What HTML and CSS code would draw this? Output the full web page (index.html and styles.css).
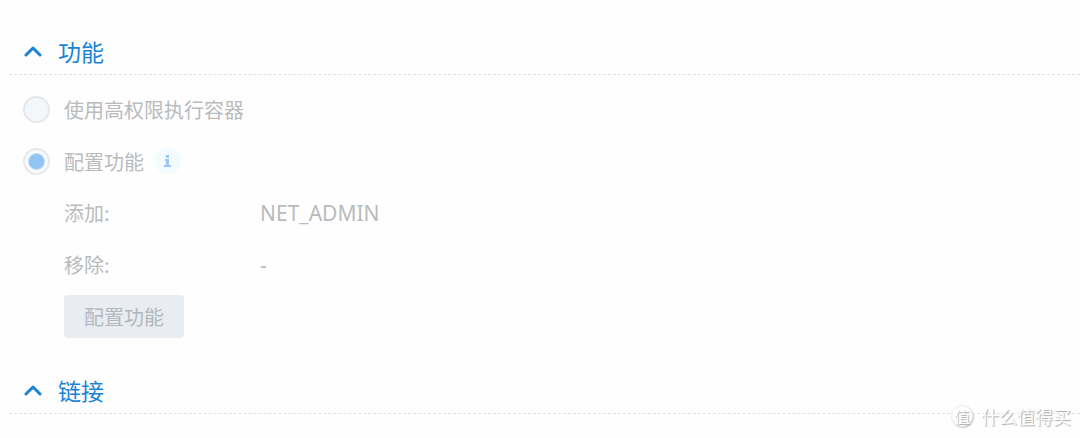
FILE: index.html
```html
<!DOCTYPE html>
<html lang="zh-CN">
<head>
    <meta charset="UTF-8">
    <title>功能</title>
    <meta name="viewport" content="width=device-width, initial-scale=1.0">
    <link rel="stylesheet" href="styles.css">
</head>
<body>

<div class="main">
    <section class="section">
        <h2 class="section-title">
            <button type="button" class="toggle">
                <svg class="arrow" viewBox="0 0 18 12"><path d="M2 10 L9 3 L16 10"/></svg>
                <span>功能</span>
            </button>
        </h2>

        <div class="section-body">
            <div class="option">
                <input type="radio" name="capability" id="privileged" disabled>
                <label for="privileged">使用高权限执行容器</label>
            </div>

            <div class="option">
                <input type="radio" name="capability" id="custom" checked disabled>
                <label for="custom">配置功能</label>
                <svg class="info" viewBox="0 0 26 26">
                    <circle class="info-bg" cx="13" cy="13" r="13"/>
                    <path d="M11 7h3v3h-3z M10 11h4v6h2v2h-7v-2h2v-4h-1z"/>
                </svg>
            </div>

            <dl class="details">
                <dt>添加:</dt>
                <dd>NET_ADMIN</dd>
                <dt>移除:</dt>
                <dd>-</dd>
            </dl>

            <button type="button" class="configure" disabled>配置功能</button>
        </div>
    </section>

    <section class="section">
        <h2 class="section-title">
            <button type="button" class="toggle">
                <svg class="arrow" viewBox="0 0 18 12"><path d="M2 10 L9 3 L16 10"/></svg>
                <span>链接</span>
            </button>
        </h2>
    </section>
</div>

<div class="watermark">
    <span class="watermark-logo">值</span>
    <span>什么值得买</span>
</div>

</body>
</html>
```
FILE: styles.css
```css
body {
    margin: 0;
    background-color: #fefefe;
    font-family: "Noto Sans CJK SC", sans-serif;
    font-size: 20px;
    color: #b9bbbc;
}

.main {
    padding: 28px 0 0 9px;
}

.section-title {
    margin: 0;
    border-bottom: 1px dashed #dfe1e2;
    font-size: 23px;
    font-weight: normal;
}

.toggle {
    display: flex;
    align-items: center;
    gap: 16px;
    height: 46px;
    padding: 0 0 0 15px;
    border: 0;
    background: none;
    font: inherit;
    color: #1b83d6;
    cursor: pointer;
}

.arrow {
    width: 18px;
    height: 12px;
    fill: none;
    stroke: #1b83d6;
    stroke-width: 3;
    stroke-linecap: round;
    stroke-linejoin: round;
}

.section-body {
    padding: 8px 0 29px 14px;
}

.option {
    display: flex;
    align-items: center;
    height: 52px;
}

.option input {
    appearance: none;
    box-sizing: border-box;
    width: 27px;
    height: 27px;
    margin: 0 14px 0 0;
    border: 2px solid #e5e7ea;
    border-radius: 50%;
    background-color: #f3f7fa;
}

.option input:checked {
    background: radial-gradient(circle, #92c4f2 7px, #f8fbfe 9px);
}

.info {
    width: 26px;
    height: 26px;
    margin-left: 11px;
    fill: #9cc6f3;
}

.info-bg {
    fill: #f3fbff;
}

.details {
    display: grid;
    grid-template-columns: 196px 1fr;
    margin: 0;
    padding-left: 41px;
    line-height: 52px;
}

.details dd {
    margin: 0;
    font-family: "Noto Sans", sans-serif;
    font-size: 21px;
}

.configure {
    display: block;
    height: 43px;
    margin: 4px 0 0 41px;
    padding: 0 20px;
    border: 0;
    border-radius: 4px;
    background-color: #e9edf1;
    font: inherit;
    color: #b3b8bd;
}

.watermark {
    position: absolute;
    right: 9px;
    bottom: 11px;
    display: flex;
    align-items: center;
    gap: 8px;
    font-size: 18px;
    line-height: 22px;
    color: #fefefe;
    text-shadow: 1px 1px 1px #aaaaaa;
}

.watermark-logo {
    width: 20px;
    height: 20px;
    border: 1px solid #eeeeee;
    border-radius: 50%;
    background-color: #fefefe;
    box-shadow: 1px 1px 1px #cccccc;
    font-size: 16px;
    line-height: 20px;
    text-align: center;
}
```
